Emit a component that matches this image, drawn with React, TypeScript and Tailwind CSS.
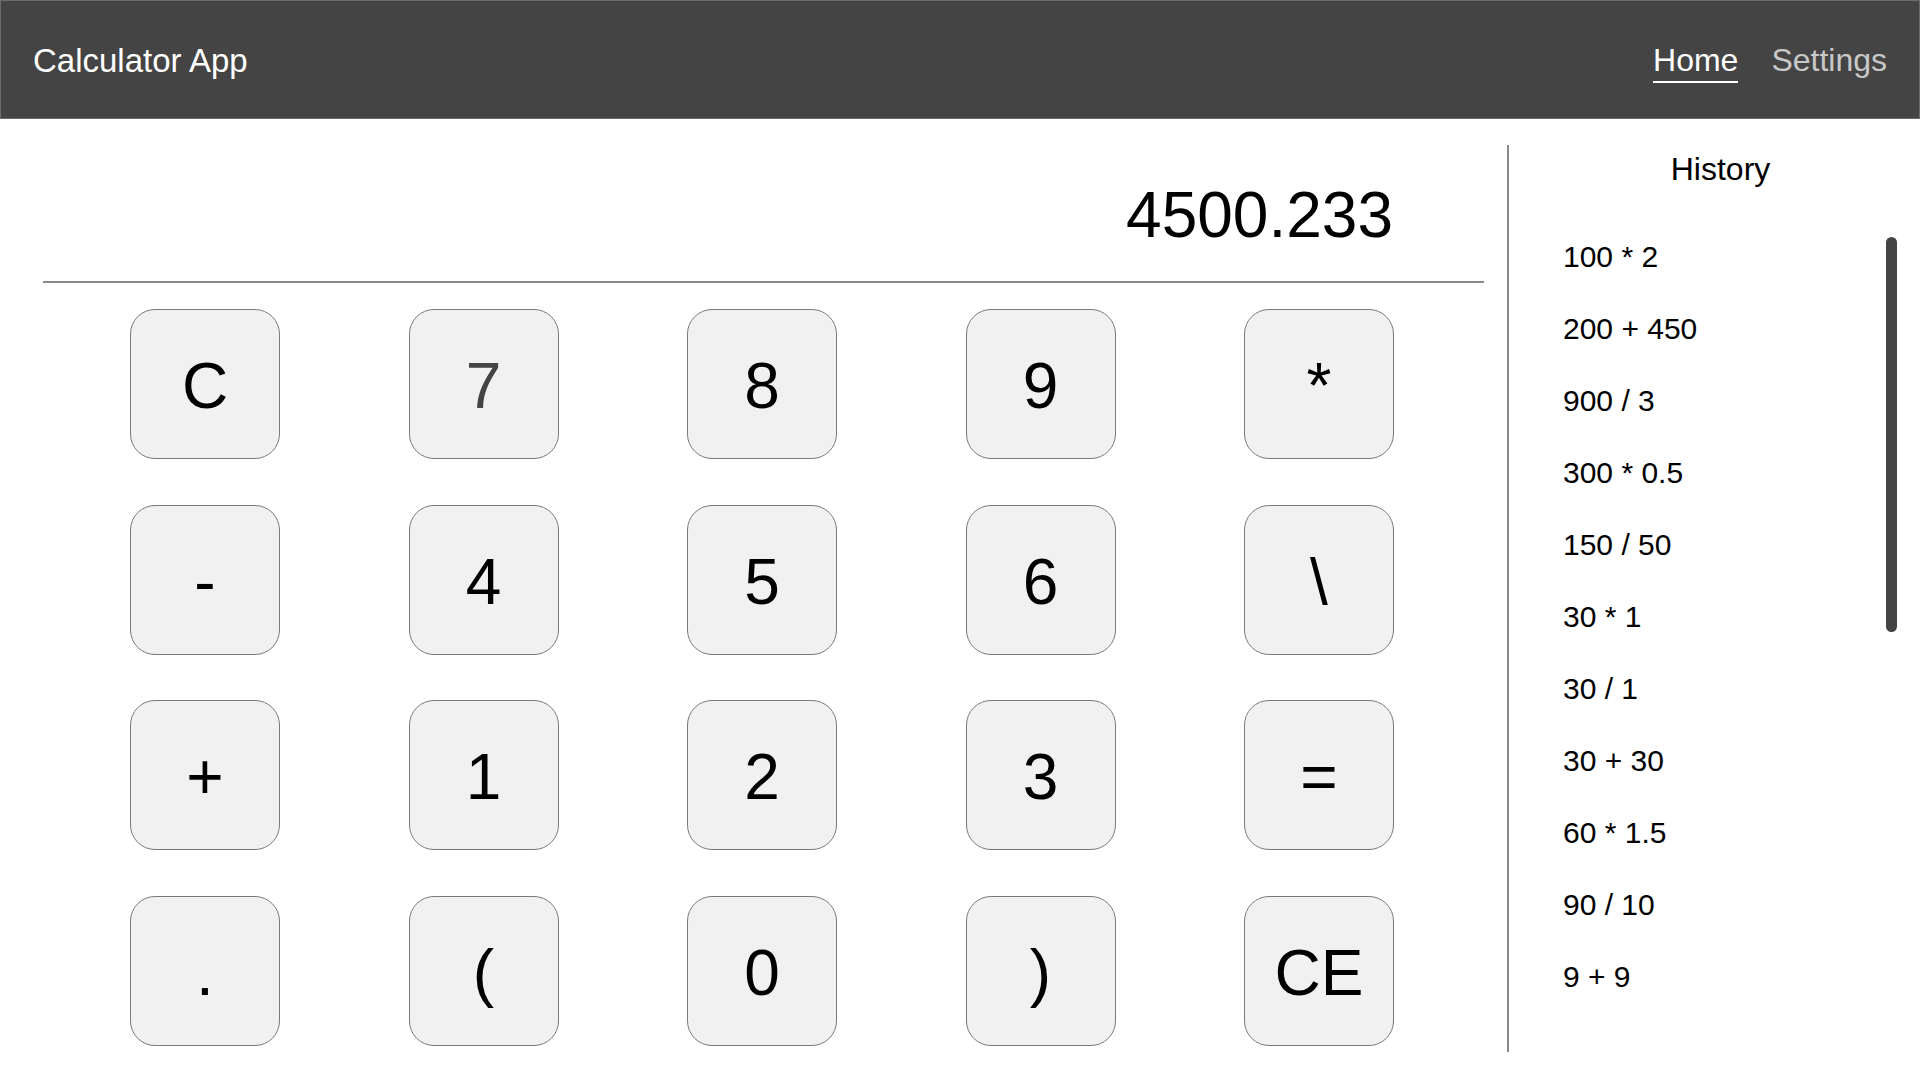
import React from "react";

const keys = [
  "C", "7", "8", "9", "*",
  "-", "4", "5", "6", "\\",
  "+", "1", "2", "3", "=",
  ".", "(", "0", ")", "CE",
];

const history = [
  "100 * 2",
  "200 + 450",
  "900 / 3",
  "300 * 0.5",
  "150 / 50",
  "30 * 1",
  "30 / 1",
  "30 + 30",
  "60 * 1.5",
  "90 / 10",
  "9 + 9",
];

function Header() {
  return (
    <header className="h-[119px] bg-[#444] border border-[#6b6b6b] px-[32px] pt-[3px] flex items-center justify-between text-[32px]">
      <h1 className="text-white text-[33px]">Calculator App</h1>
      <nav className="flex items-center gap-[33px] mt-[3px]">
        <a className="text-white border-b-2 border-white pb-[2px] leading-[37px]">Home</a>
        <a className="text-[#c8c8c8] border-b-2 border-transparent pb-[2px] leading-[37px]">Settings</a>
      </nav>
    </header>
  );
}

function Calculator() {
  return (
    <section className="flex-1 pl-[43px] pr-[23px]">
      <div className="h-[138px] flex items-end justify-end pr-[91px] pb-[34px] border-b-2 border-[#8a8a8a]">
        <span className="text-[64px] leading-none text-black">4500.233</span>
      </div>
      <div className="mt-[26px] ml-[87px] grid grid-cols-[repeat(5,150px)] gap-x-[128.5px] gap-y-[45.5px]">
        {keys.map((k) => (
          <button
            key={k}
            className={
              "h-[150px] w-[150px] rounded-[25px] border border-[#7a7a7a] bg-[#f1f1f1] text-[64px] leading-none pt-[4px] flex items-center justify-center " +
              (k === "7" ? "text-[#444]" : "text-black")
            }
          >
            {k}
          </button>
        ))}
      </div>
    </section>
  );
}

function History() {
  return (
    <aside className="w-[413px] border-l-2 border-[#8a8a8a] relative">
      <h2 className="pl-[12px] pt-[6px] text-center text-[32px] leading-[37px] text-black">History</h2>
      <ul className="mt-[52px] pl-[54px] flex flex-col gap-[38px]">
        {history.map((h, i) => (
          <li key={i} className="text-[30px] leading-[34px] text-black">
            {h}
          </li>
        ))}
      </ul>
      <div className="absolute right-[23px] top-[92px] h-[395px] w-[11px] rounded-full bg-[#444]" />
    </aside>
  );
}

export default function App() {
  return (
    <div className="w-[1920px] h-[1080px] bg-white overflow-hidden font-['Liberation_Sans',Arial,sans-serif]">
      <Header />
      <main className="flex pt-[26px] h-[961px] pb-[28px]">
        <Calculator />
        <History />
      </main>
    </div>
  );
}
